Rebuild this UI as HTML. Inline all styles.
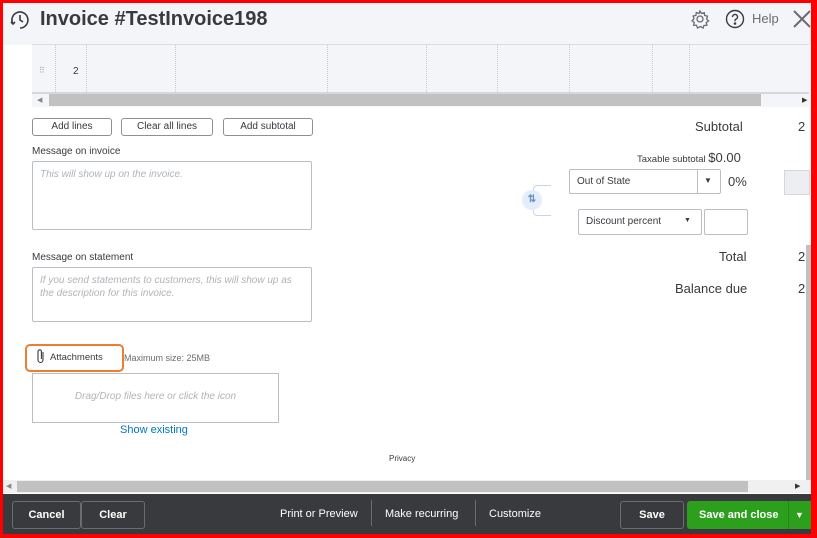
<!DOCTYPE html>
<html><head><style>
*{box-sizing:border-box;margin:0;padding:0}
body{width:817px;height:538px;overflow:hidden;font-family:"Liberation Sans",Arial,sans-serif;background:#fff;position:relative;color:#393a3d}
.a{position:absolute}
.btn{position:absolute;border:1px solid #8d9096;border-radius:3px;background:#fff;font-size:10px;text-align:center;line-height:16px;color:#393a3d}
.lbl{font-size:10px;color:#393a3d}
.ta{position:absolute;border:1px solid #babec5;border-radius:2px;font-size:10px;font-style:italic;color:#b0b3b8;padding:6px 7px;line-height:13px}
.vl{position:absolute;top:45px;height:49px;border-left:1px dotted #c9c9c9}
.fb{position:absolute;top:502px;height:28px;border:1px solid #6b6c72;border-radius:3px;color:#fff;font-size:11px;font-weight:bold;text-align:center;line-height:26px}
.fl{position:absolute;top:508px;color:#fff;font-size:11px}
</style></head><body>
<div class="a" style="left:0;top:0;width:817px;height:45px;background:#f4f5f8"></div>
<div class="a" style="left:32px;top:45px;width:777px;height:62px;background:#f4f5f8"></div>
<!-- header -->
<svg class="a" style="left:9px;top:9px" width="22" height="22" viewBox="0 0 22 22" fill="none" stroke="#393a3d" stroke-width="1.6"><path d="M4 15A8 8 0 1 1 11 19"/><path d="M11 6v5l3 2"/><path d="M2 13l2 2 2-2"/></svg>
<div class="a" style="left:40px;top:8px;font-size:20px;font-weight:bold;color:#393a3d">Invoice #TestInvoice198</div>
<svg class="a" style="left:690px;top:9px" width="20" height="20" viewBox="0 0 20 20" fill="none" stroke="#6b6c72" stroke-width="1.3"><circle cx="10" cy="10" r="3"/><path d="M10 2l1.5 2.5 2.8-.8.4 2.8 2.8.6-.9 2.8 2 2-2.3 1.6.6 2.8-2.9.1-1 2.7-2.4-1.6L7.5 19l-1-2.7-2.9-.1.6-2.8L2 11.8l2-2-.9-2.8 2.8-.6.4-2.8 2.8.8z"/></svg>
<svg class="a" style="left:725px;top:9px" width="20" height="20" viewBox="0 0 20 20" fill="none" stroke="#393a3d" stroke-width="1.4"><circle cx="10" cy="10" r="8.5"/><path d="M7.5 8a2.5 2.5 0 1 1 3.3 2.3c-.6.3-.8.7-.8 1.4v.5"/><circle cx="10" cy="14.5" r=".6" fill="#393a3d"/></svg>
<div class="a" style="left:752px;top:11px;font-size:13px;color:#6b6c72">Help</div>
<svg class="a" style="left:792px;top:9px" width="20" height="20" viewBox="0 0 20 20" stroke="#6b6c72" stroke-width="2"><path d="M2 2l16 16M18 2L2 18"/></svg>
<!-- grid -->
<div class="a" style="left:32px;top:44px;width:777px;border-top:1px solid #ddd"></div>
<div class="vl" style="left:55px"></div><div class="vl" style="left:86px"></div><div class="vl" style="left:175px"></div><div class="vl" style="left:327px"></div><div class="vl" style="left:426px"></div><div class="vl" style="left:497px"></div><div class="vl" style="left:569px"></div><div class="vl" style="left:652px"></div><div class="vl" style="left:689px"></div>
<div class="a" style="left:39px;top:66px;font-size:8px;color:#aaa;letter-spacing:-1px">⠿</div>
<div class="a" style="left:73px;top:66px;font-size:10px">2</div>
<div class="a" style="left:32px;top:92px;width:777px;height:2px;background:#d4d7dc"></div>
<div class="a" style="left:49px;top:94px;width:712px;height:12px;background:#c1c1c1"></div>
<div class="a" style="left:37px;top:96px;font-size:7px;color:#888">◀</div>
<div class="a" style="left:802px;top:96px;font-size:7px;color:#333">▶</div>
<!-- buttons -->
<div class="btn" style="left:32px;top:118px;width:80px;height:18px">Add lines</div>
<div class="btn" style="left:121px;top:118px;width:92px;height:18px">Clear all lines</div>
<div class="btn" style="left:223px;top:118px;width:90px;height:18px">Add subtotal</div>
<div class="lbl a" style="left:32px;top:146px">Message on invoice</div>
<div class="ta" style="left:32px;top:161px;width:280px;height:69px">This will show up on the invoice.</div>
<div class="lbl a" style="left:32px;top:252px">Message on statement</div>
<div class="ta" style="left:32px;top:267px;width:280px;height:55px">If you send statements to customers, this will show up as the description for this invoice.</div>
<div class="a" style="left:25px;top:344px;width:99px;height:28px;border:2px solid #ef7d2f;border-radius:5px"></div>
<svg class="a" style="left:36px;top:348px" width="10" height="16" viewBox="0 0 10 16" fill="none" stroke="#393a3d" stroke-width="1.1"><path d="M7 4v8a2.5 2.5 0 0 1-5 0V3.5a1.7 1.7 0 0 1 3.4 0V11"/></svg>
<div class="a" style="left:50px;top:352px;font-size:9.5px">Attachments</div>
<div class="a" style="left:124px;top:353px;font-size:9px;color:#6b6c72">Maximum size: 25MB</div>
<div class="a" style="left:32px;top:373px;width:247px;height:50px;border:1px solid #babec5;font-size:10px;font-style:italic;color:#b0b3b8;text-align:center;line-height:46px">Drag/Drop files here or click the icon</div>
<div class="a" style="left:120px;top:424px;font-size:11px;color:#0077c5">Show existing</div>
<div class="a" style="left:389px;top:454px;font-size:8px">Privacy</div>
<!-- right totals -->
<div class="a" style="left:695px;top:119px;font-size:13px">Subtotal</div>
<div class="a" style="left:798px;top:119px;font-size:13px">2</div>
<div class="a" style="left:637px;top:150px;font-size:9.5px">Taxable subtotal <span style="font-size:13px">$0.00</span></div>
<div class="a" style="left:533px;top:185px;width:18px;height:31px;border:1px solid #c9d4e8;border-right:none;border-radius:4px 0 0 4px"></div>
<div class="a" style="left:522px;top:190px;width:20px;height:20px;border-radius:50%;background:#e2eefb;color:#6b8fc0;font-size:10px;font-weight:bold;text-align:center;line-height:20px">⇅</div>
<div class="a" style="left:569px;top:169px;width:152px;height:25px;border:1px solid #babec5;border-radius:2px;font-size:10px;line-height:23px;padding-left:7px">Out of State</div>
<div class="a" style="left:697px;top:169px;width:1px;height:25px;background:#babec5"></div>
<div class="a" style="left:704px;top:176px;font-size:8px">▼</div>
<div class="a" style="left:728px;top:174px;font-size:13px">0%</div>
<div class="a" style="left:784px;top:170px;width:26px;height:25px;background:#eceef1;border:1px solid #d4d7dc"></div>
<div class="a" style="left:578px;top:209px;width:124px;height:26px;border:1px solid #babec5;border-radius:2px;font-size:10px;line-height:24px;padding-left:7px">Discount percent</div>
<div class="a" style="left:684px;top:217px;font-size:7px">▼</div>
<div class="a" style="left:704px;top:209px;width:44px;height:26px;border:1px solid #babec5;border-radius:2px"></div>
<div class="a" style="left:719px;top:249px;font-size:13px">Total</div>
<div class="a" style="left:798px;top:249px;font-size:13px">2</div>
<div class="a" style="left:675px;top:281px;font-size:13px">Balance due</div>
<div class="a" style="left:798px;top:281px;font-size:13px">2</div>
<div class="a" style="left:806px;top:245px;width:5px;height:235px;background:#c1c1c1"></div>
<!-- bottom scrollbar -->
<div class="a" style="left:3px;top:480px;width:808px;height:13px;background:#f0f0f0"></div>
<div class="a" style="left:17px;top:481px;width:731px;height:11px;background:#c1c1c1"></div>
<div class="a" style="left:6px;top:482px;font-size:7px;color:#888">◀</div>
<div class="a" style="left:795px;top:482px;font-size:7px;color:#333">▶</div>
<!-- footer -->
<div class="a" style="left:3px;top:494px;width:808px;height:40px;background:#393a3d"></div>
<div class="fb" style="left:12px;width:69px;top:501px">Cancel</div>
<div class="fb" style="left:81px;width:64px;top:501px">Clear</div>
<div class="fl" style="left:280px">Print or Preview</div>
<div class="a" style="left:371px;top:500px;width:1px;height:26px;background:#6b6c72"></div>
<div class="fl" style="left:385px">Make recurring</div>
<div class="a" style="left:475px;top:500px;width:1px;height:26px;background:#6b6c72"></div>
<div class="fl" style="left:489px">Customize</div>
<div class="fb" style="left:620px;width:64px;top:501px">Save</div>
<div class="a" style="left:687px;top:501px;width:124px;height:28px;background:#2ca01c;border-radius:3px 0 0 3px;color:#fff;font-size:11px;font-weight:bold;line-height:28px;padding-left:12px">Save and close</div>
<div class="a" style="left:788px;top:501px;width:1px;height:28px;background:#248a17"></div>
<div class="a" style="left:795px;top:510px;color:#fff;font-size:9px">▼</div>
<!-- red frame -->
<div class="a" style="left:0;top:0;width:817px;height:538px;border:3px solid #f00;border-right-width:6px;border-bottom-width:4px"></div>
</body></html>
